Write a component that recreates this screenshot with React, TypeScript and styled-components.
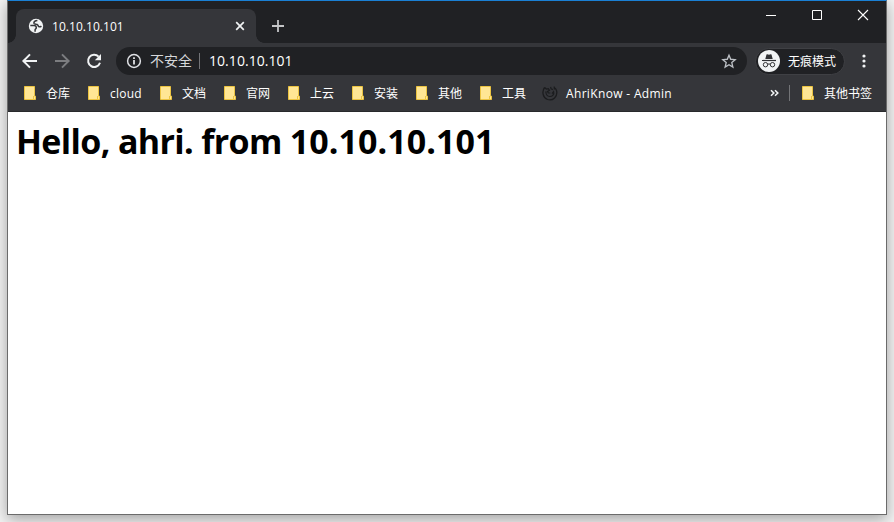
import React from "react";
import styled, { createGlobalStyle } from "styled-components";

const Global = createGlobalStyle`
  * { box-sizing: border-box; }
  body { margin: 0; background: #f3f3f3; overflow: hidden; }
  svg { display: block; flex: none; }
`;

const Desktop = styled.div`
  width: 894px;
  height: 522px;
  padding: 0 7px;
  overflow: hidden;
  font-family: "Open Sans", "Noto Sans CJK SC", sans-serif;
`;

const Window = styled.div`
  width: 880px;
  height: 515px;
  display: flex;
  flex-direction: column;
  border: 1px solid #6b6b6b;
  border-top-color: #1a80d4;
  background: #fff;
  box-shadow: 0 4px 14px rgba(0, 0, 0, 0.34);
`;

const TabStrip = styled.div`
  height: 42px;
  flex: none;
  display: flex;
  background: #202124;
`;

const Tab = styled.div`
  position: relative;
  width: 240px;
  height: 34px;
  margin: 8px 0 0 8px;
  padding: 0 8px 0 12px;
  display: flex;
  align-items: center;
  border-radius: 8px 8px 0 0;
  background: #35363a;
  &::before,
  &::after {
    content: "";
    position: absolute;
    bottom: 0;
    width: 8px;
    height: 8px;
  }
  &::before {
    left: -8px;
    background: radial-gradient(circle at 0 0, transparent 7.5px, #35363a 8px);
  }
  &::after {
    right: -8px;
    background: radial-gradient(circle at 100% 0, transparent 7.5px, #35363a 8px);
  }
`;

const Label = styled.span<{ $size?: number; $spacing?: number; $color?: string }>`
  font-size: ${(p) => p.$size ?? 12}px;
  font-weight: 400;
  letter-spacing: ${(p) => p.$spacing ?? 0}px;
  color: ${(p) => p.$color ?? "#ffffff"};
  line-height: 18px;
  white-space: nowrap;
`;

const TabTitle = styled(Label)`
  width: 184px;
  margin-left: 8px;
  padding-top: 1px;
`;

const NewTab = styled.div`
  padding: 19px 0 0 16px;
`;

const Controls = styled.div`
  margin-left: auto;
  display: flex;
  gap: 34px;
  padding: 8px 17px 0 0;
`;

const Toolbar = styled.div`
  height: 36px;
  flex: none;
  display: flex;
  align-items: center;
  padding-left: 12px;
  background: #35363a;
`;

const NavButtons = styled.div`
  display: flex;
  gap: 12px;
  width: 96px;
`;

const Omnibox = styled.div`
  width: 631px;
  height: 28px;
  padding: 0 10px 0 9px;
  display: flex;
  align-items: center;
  border-radius: 14px;
  background: #202124;
`;

const Security = styled(Label)`
  width: 49px;
  margin-left: 7px;
`;

const Divider = styled.span`
  width: 1px;
  height: 16px;
  flex: none;
  background: #737477;
`;

const Address = styled(Label)`
  flex: 1;
  margin-left: 9px;
`;

const Incognito = styled.div`
  width: 90px;
  height: 27px;
  margin: 0 10px 0 8px;
  padding-left: 2px;
  display: flex;
  align-items: center;
  gap: 8px;
  border: 1px solid #3f4044;
  border-radius: 14px;
  background: #202124;
  ${Label} {
    padding-top: 1px;
  }
`;

const Bookmarks = styled.div`
  height: 33px;
  flex: none;
  display: flex;
  align-items: center;
  padding: 0 14px 4px 16px;
  background: #35363a;
  border-bottom: 1px solid #28292c;
  ${Label} {
    padding-top: 2px;
  }
`;

const Bookmark = styled.div<{ $width: number }>`
  width: ${(p) => p.$width}px;
  flex: none;
  display: flex;
  align-items: center;
`;

const IconSlot = styled.span<{ $width?: number }>`
  width: ${(p) => p.$width ?? 22}px;
  flex: none;
`;

const Overflow = styled.div`
  margin: 0 9px 0 auto;
`;

const OtherBookmarks = styled.div`
  display: flex;
  align-items: center;
  margin-left: 12px;
`;

const Page = styled.main`
  flex: 1;
  padding: 5px 8px;
`;

const Heading = styled.h1`
  margin: 0;
  font-family: "Open Sans", sans-serif;
  font-size: 34px;
  font-weight: 700;
  line-height: 48px;
  letter-spacing: -0.65px;
  color: #000;
  white-space: nowrap;
`;

const HostAddress = styled.span`
  letter-spacing: 0.06px;
`;

const Folder = () => (
  <svg width="12" height="14" viewBox="0 0 12 14">
    <path d="M.5.5h10v9.6h1v3.4H.5z" fill="#ffe694" stroke="#ecc441" />
    <path d="M9.5 10v3.2" stroke="#ecc441" fill="none" />
  </svg>
);

const Globe = () => (
  <svg width="16" height="16" viewBox="0 0 16 16">
    <circle cx="8" cy="8" r="7.2" fill="#f1f3f4" />
    <path
      d="M9.4 2.5C7 2.6 5.600 4 6 5.300c.4 1.200 2 .8 3.200 1.300 1.200.6.9 2 2.100 2.200.9.1 1.500-.2 2.100-.7"
      fill="none"
      stroke="#35363a"
      strokeWidth="1.600"
    />
    <path d="M2.300 7.500h3.500c1.500 0 2.500 1 2.500 2.200 0 1-.8 1-1.100 1.600-.2.600-.1 1.500-.1 2.400" fill="none" stroke="#35363a" strokeWidth="1.500" />
  </svg>
);

const TabClose = () => (
  <svg width="16" height="16" viewBox="0 0 16 16">
    <path d="m4.200 4.200 7.600 7.600m0-7.600-7.600 7.600" stroke="#f1f3f4" strokeWidth="1.700" />
  </svg>
);

const Plus = () => (
  <svg width="12" height="12" viewBox="0 0 12 12">
    <path d="M6 0v12M0 6h12" stroke="#c4c5c7" strokeWidth="1.800" />
  </svg>
);

const Minimize = () => (
  <svg width="12" height="12" viewBox="0 0 12 12">
    <path d="M1 6.500h10" stroke="#fff" />
  </svg>
);
const Maximize = () => (
  <svg width="12" height="12" viewBox="0 0 12 12">
    <path d="M1.500 1.500h9v9h-9z" stroke="#fff" fill="none" />
  </svg>
);
const CloseWindow = () => (
  <svg width="12" height="12" viewBox="0 0 12 12">
    <path d="m1 1 10 10M11 1 1 11" stroke="#fff" strokeWidth="1.100" />
  </svg>
);

const Arrow = ({ forward }: { forward?: boolean }) => (
  <svg width="20" height="20" viewBox="0 0 20 20">
    <path
      d={forward ? "M3 10h13M10 3.400l6.600 6.600-6.600 6.600" : "M17 10H4M10 3.400 3.400 10l6.600 6.600"}
      fill="none"
      stroke={forward ? "#7c7d80" : "#f1f3f4"}
      strokeWidth="2"
    />
  </svg>
);

const Reload = () => (
  <svg width="20" height="20" viewBox="0 0 20 20">
    <path d="M14.600 5.600A6.100 6.100 0 1 0 16 11.800" fill="none" stroke="#f1f3f4" strokeWidth="2" />
    <path d="M17 3v6.200h-6.200z" fill="#f1f3f4" />
  </svg>
);

const Info = () => (
  <svg width="18" height="18" viewBox="0 0 18 18">
    <circle cx="9" cy="9" r="6.400" fill="none" stroke="#dfe1e5" strokeWidth="1.500" />
    <path d="M9 8v4.400M9 5.200v1.700" stroke="#dfe1e5" strokeWidth="1.800" />
  </svg>
);

const Star = () => (
  <svg width="16" height="16" viewBox="0 0 24 24">
    <path
      d="m12 3.200 2.600 6.200 6.700.6-5.100 4.400 1.600 6.600-5.800-3.500L6.200 21l1.600-6.600L2.700 10l6.700-.6z"
      fill="none"
      stroke="#bdc1c6"
      strokeWidth="2"
    />
  </svg>
);

const Spy = () => (
  <svg width="22" height="22" viewBox="0 0 22 22">
    <circle cx="11" cy="11" r="11" fill="#f1f3f4" />
    <path d="M7.300 9 8.500 4.600q.2-.6.8-.4l1.700.5 1.700-.5q.6-.2.8.4L14.700 9z" fill="#303134" />
    <path d="M4 10.500h14" stroke="#303134" strokeWidth="1.200" />
    <path d="M9.600 14.300q1.400-.8 2.800 0" stroke="#303134" fill="none" />
    <circle cx="7.500" cy="14.700" r="2.200" stroke="#303134" fill="none" />
    <circle cx="14.500" cy="14.700" r="2.200" stroke="#303134" fill="none" />
  </svg>
);

const Menu = () => (
  <svg width="18" height="18" viewBox="0 0 18 18" fill="#f1f3f4">
    <circle cx="9" cy="4" r="1.600" />
    <circle cx="9" cy="9" r="1.600" />
    <circle cx="9" cy="14" r="1.600" />
  </svg>
);

const FoxMark = () => (
  <svg width="16" height="16" viewBox="0 0 16 16" fill="none" stroke="#1b1c1e">
    <path d="M2.600 2.500C-.4 6.400.8 12.700 5.500 14.500c5.500 1.900 10.400-3.200 9.100-8.700-.4-1.400-1.300-2.600-2.400-3.300" strokeWidth="1.300" />
    <path d="M2.600 2.300 4.300 4l2-.4 1.200 1.700-2 1.200.8 1.400 2 .1M4 6.300c-.5 2.900 1.200 5.200 3.800 5.200 2.800 0 4.600-2.300 3.800-4.900L10 8.700M8.600 1.800l.5 2 1.800.8M12.200 1.500l.2 3" strokeWidth="1.200" />
  </svg>
);

const Chevrons = () => (
  <svg width="10" height="8" viewBox="0 0 10 8">
    <path d="m1 1.200 2.800 2.800L1 6.800m4-5.600L7.800 4 5 6.800" fill="none" stroke="#f1f3f4" strokeWidth="1.600" />
  </svg>
);

const folders = [
  { name: "仓库", width: 64 },
  { name: "cloud", width: 72, spacing: 0.25 },
  { name: "文档", width: 64 },
  { name: "官网", width: 64 },
  { name: "上云", width: 64 },
  { name: "安装", width: 64 },
  { name: "其他", width: 64 },
  { name: "工具", width: 62 },
];

export default function App() {
  return (
    <>
      <Global />
      <Desktop>
        <Window>
          <TabStrip>
            <Tab>
              <Globe />
              <TabTitle $spacing={0.04}>10.10.10.101</TabTitle>
              <TabClose />
            </Tab>
            <NewTab><Plus /></NewTab>
            <Controls>
              <Minimize />
              <Maximize />
              <CloseWindow />
            </Controls>
          </TabStrip>
          <Toolbar>
            <NavButtons>
              <Arrow />
              <Arrow forward />
              <Reload />
            </NavButtons>
            <Omnibox>
              <Info />
              <Security $size={14} $color="#d5d7da">不安全</Security>
              <Divider />
              <Address $size={14} $spacing={0.05}>10.10.10.101</Address>
              <Star />
            </Omnibox>
            <Incognito>
              <Spy />
              <Label>无痕模式</Label>
            </Incognito>
            <Menu />
          </Toolbar>
          <Bookmarks>
            {folders.map((f) => (
              <Bookmark key={f.name} $width={f.width}>
                <IconSlot><Folder /></IconSlot>
                <Label $spacing={f.spacing}>{f.name}</Label>
              </Bookmark>
            ))}
            <Bookmark $width={140}>
              <IconSlot $width={24}><FoxMark /></IconSlot>
              <Label $spacing={0.34}>AhriKnow - Admin</Label>
            </Bookmark>
            <Overflow><Chevrons /></Overflow>
            <Divider />
            <OtherBookmarks>
              <IconSlot><Folder /></IconSlot>
              <Label>其他书签</Label>
            </OtherBookmarks>
          </Bookmarks>
          <Page>
            <Heading>Hello, ahri. from <HostAddress>10.10.10.101</HostAddress></Heading>
          </Page>
        </Window>
      </Desktop>
    </>
  );
}
